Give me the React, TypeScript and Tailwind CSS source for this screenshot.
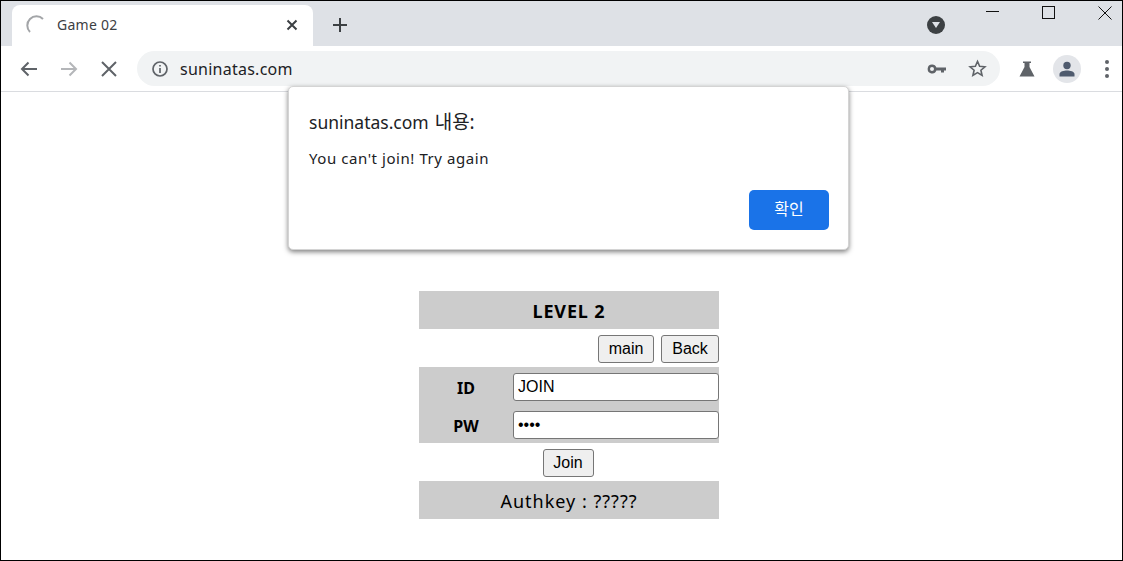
const ui = "font-['Noto_Sans','Noto_Sans_CJK_KR',sans-serif]";
const arial = "font-['Liberation_Sans',sans-serif]";

function TabStrip() {
  return (
    <div className="flex h-[45px] items-end bg-[#dee1e6] pl-[11px]">
      <div className={`flex h-[41px] w-[301px] items-center rounded-t-[8px] bg-white pb-[2px] pl-[13px] pr-[15px] ${ui}`}>
        <svg width="22" height="22" viewBox="0 0 22 22" fill="none">
          <path d="M5 18 A9 9 0 0 1 18 5" stroke="#a3a5a8" strokeWidth="2" />
        </svg>
        <span className="ml-[10px] flex-1 text-[14px] tracking-[0.25px] text-[#3c4043]">Game 02</span>
        <svg width="12" height="12" viewBox="0 0 12 12" stroke="#3c4043" strokeWidth="2">
          <path d="M1.5 1.5 L10.5 10.5 M10.5 1.5 L1.5 10.5" />
        </svg>
      </div>
      <svg className="mb-[13px] ml-[19px]" width="16" height="16" viewBox="0 0 16 16" stroke="#3c4043" strokeWidth="2">
        <path d="M8 1 V15 M1 8 H15" />
      </svg>
      <div className="ml-auto mb-[12px] mr-[177px] flex h-[18px] w-[18px] items-center justify-center rounded-full bg-[#3c4043]">
        <svg width="10" height="8" viewBox="0 0 10 8"><path d="M1 1 H9 L5 7 Z" fill="#dee1e6" /></svg>
      </div>
      <WindowControls />
    </div>
  );
}

function WindowControls() {
  return (
    <div className="absolute right-[1px] top-[1px] flex h-[22px] items-start">
      <svg className="mr-[43px] mt-[9px]" width="13" height="1"><path d="M0 0.5 H13" stroke="#111" /></svg>
      <svg className="mr-[43px] mt-[4px]" width="13" height="13"><rect x="0.5" y="0.5" width="12" height="12" fill="none" stroke="#111" /></svg>
      <svg className="mr-[9px] mt-[4px]" width="14" height="14"><path d="M0.5 0.5 L13.5 13.5 M13.5 0.5 L0.5 13.5" stroke="#111" /></svg>
    </div>
  );
}

function Toolbar() {
  return (
    <div className="flex h-[46px] items-center border-b border-[#dadce0] bg-white">
      <svg className="ml-[19px]" width="17" height="16" viewBox="0 0 17 16" fill="none" stroke="#5f6368" strokeWidth="2">
        <path d="M17 8 H2 M8.5 1.5 L2 8 L8.5 14.5" />
      </svg>
      <svg className="ml-[24px]" width="17" height="16" viewBox="0 0 17 16" fill="none" stroke="#b4b6b9" strokeWidth="2">
        <path d="M0 8 H15 M8.5 1.5 L15 8 L8.5 14.5" />
      </svg>
      <svg className="ml-[23px]" width="16" height="16" viewBox="0 0 16 16" stroke="#5f6368" strokeWidth="2">
        <path d="M1 1 L15 15 M15 1 L1 15" />
      </svg>
      <div className="ml-[20px] flex h-[35px] w-[863px] items-center rounded-full bg-[#f1f3f4] pl-[14px] pr-[13px]">
        <svg width="18" height="18" viewBox="0 0 18 18" fill="none">
          <circle cx="9" cy="9" r="7" stroke="#5f6368" strokeWidth="1.7" />
          <path d="M9 8 V13 M9 5 V6.6" stroke="#5f6368" strokeWidth="1.7" />
        </svg>
        <span className={`ml-[11px] flex-1 text-[16px] tracking-[0.25px] text-[#202124] ${ui}`}>suninatas.com</span>
        <svg width="20" height="10" viewBox="0 0 20 10" fill="#5f6368">
          <path fillRule="evenodd" d="M5 0.5 A4.5 4.5 0 0 1 9.4 3.5 H19 V6.5 H17 V8.5 H14 V6.5 H9.4 A4.5 4.5 0 1 1 5 0.5 Z M5 3 A2 2 0 1 0 5 7 A2 2 0 0 0 5 3 Z" />
        </svg>
        <svg className="ml-[21px]" width="19" height="19" viewBox="0 0 24 24" fill="none" stroke="#5f6368" strokeWidth="2">
          <path d="M12 3 L14.7 9.2 L21.4 9.8 L16.3 14.2 L17.8 20.8 L12 17.3 L6.2 20.8 L7.7 14.2 L2.6 9.8 L9.3 9.2 Z" />
        </svg>
      </div>
      <svg className="ml-[19px]" width="16" height="16" viewBox="0 0 16 16" fill="#5f6368">
        <path d="M4 0.5 H12 V2 H10.5 V6 L15.5 15.5 H0.5 L5.5 6 V2 H4 Z" />
      </svg>
      <div className="ml-[18px] flex h-[28px] w-[28px] items-center justify-center rounded-full bg-[#e3e5e9]">
        <svg width="16" height="16" viewBox="0 0 16 16" fill="#4f5b6e">
          <circle cx="8" cy="4.5" r="3.7" />
          <path d="M0.5 15.5 V13 C0.5 10.5 5 9.5 8 9.5 C11 9.5 15.5 10.5 15.5 13 V15.5 Z" />
        </svg>
      </div>
      <div className="ml-[24px] flex flex-col gap-[3px]">
        <span className="h-[4px] w-[4px] rounded-full bg-[#5f6368]" />
        <span className="h-[4px] w-[4px] rounded-full bg-[#5f6368]" />
        <span className="h-[4px] w-[4px] rounded-full bg-[#5f6368]" />
      </div>
    </div>
  );
}

function AlertDialog() {
  return (
    <div className={`absolute left-[287px] top-[85px] flex h-[164px] w-[561px] flex-col rounded-[5px] border border-[#d4d4d4] bg-white pb-[19px] pl-[20px] pr-[19px] pt-[21px] shadow-[0_2px_5px_rgba(0,0,0,0.5)] ${ui}`}>
      <div className="text-[17.5px] leading-[28px] text-[#202124]">
        suninatas.com<span className="ml-[1px] text-[19px]"> 내용:</span>
      </div>
      <div className="mt-[11px] text-[15px] leading-[22px] tracking-[0.56px] text-[#202124]">You can't join! Try again</div>
      <button className="ml-auto mt-auto h-[40px] w-[80px] rounded-[5px] bg-[#1a73e8] pb-[3px] text-[16px] text-white">확인</button>
    </div>
  );
}

function NativeButton({ label, className }: { label: string; className: string }) {
  return (
    <button className={`h-[28px] rounded-[3px] border border-[#767676] bg-[#efefef] text-[16px] text-black ${arial} ${className}`}>{label}</button>
  );
}

function LevelForm() {
  return (
    <div className={`ml-[418px] mt-[199px] w-[300px] ${ui}`}>
      <div className="flex h-[38px] items-center justify-center bg-[#cccccc] pt-[2px] text-[18px] font-bold tracking-[0.85px] text-black">LEVEL 2</div>
      <div className="flex h-[38px] items-center justify-end gap-[7px] pt-[2px]">
        <NativeButton label="main" className="w-[56px]" />
        <NativeButton label="Back" className="w-[58px]" />
      </div>
      <div className="flex h-[76px] flex-col bg-[#cccccc]">
        <div className="flex h-[38px] items-center pt-[2px]">
          <span className="w-[94px] pt-[2px] text-center text-[16px] font-bold text-black">ID</span>
          <input readOnly value="JOIN" className={`h-[28px] w-[206px] rounded-[3px] border border-[#767676] bg-white px-[4px] text-[16px] text-black ${arial}`} />
        </div>
        <div className="flex h-[38px] items-center pt-[2px]">
          <span className="w-[94px] pt-[2px] text-center text-[16px] font-bold text-black">PW</span>
          <input readOnly type="password" value="1234" className={`h-[28px] w-[206px] rounded-[3px] border border-[#767676] bg-white px-[4px] text-[16px] text-black ${arial}`} />
        </div>
      </div>
      <div className="flex h-[38px] items-center justify-center pr-[2px] pt-[2px]">
        <NativeButton label="Join" className="w-[51px]" />
      </div>
      <div className="flex h-[38px] items-center justify-center bg-[#cccccc] pt-[2px] text-[18px] tracking-[1px] text-black">Authkey : ?????</div>
    </div>
  );
}

export default function App() {
  return (
    <div className="relative h-[561px] w-[1123px] overflow-hidden border border-black bg-white">
      <TabStrip />
      <Toolbar />
      <LevelForm />
      <AlertDialog />
    </div>
  );
}
